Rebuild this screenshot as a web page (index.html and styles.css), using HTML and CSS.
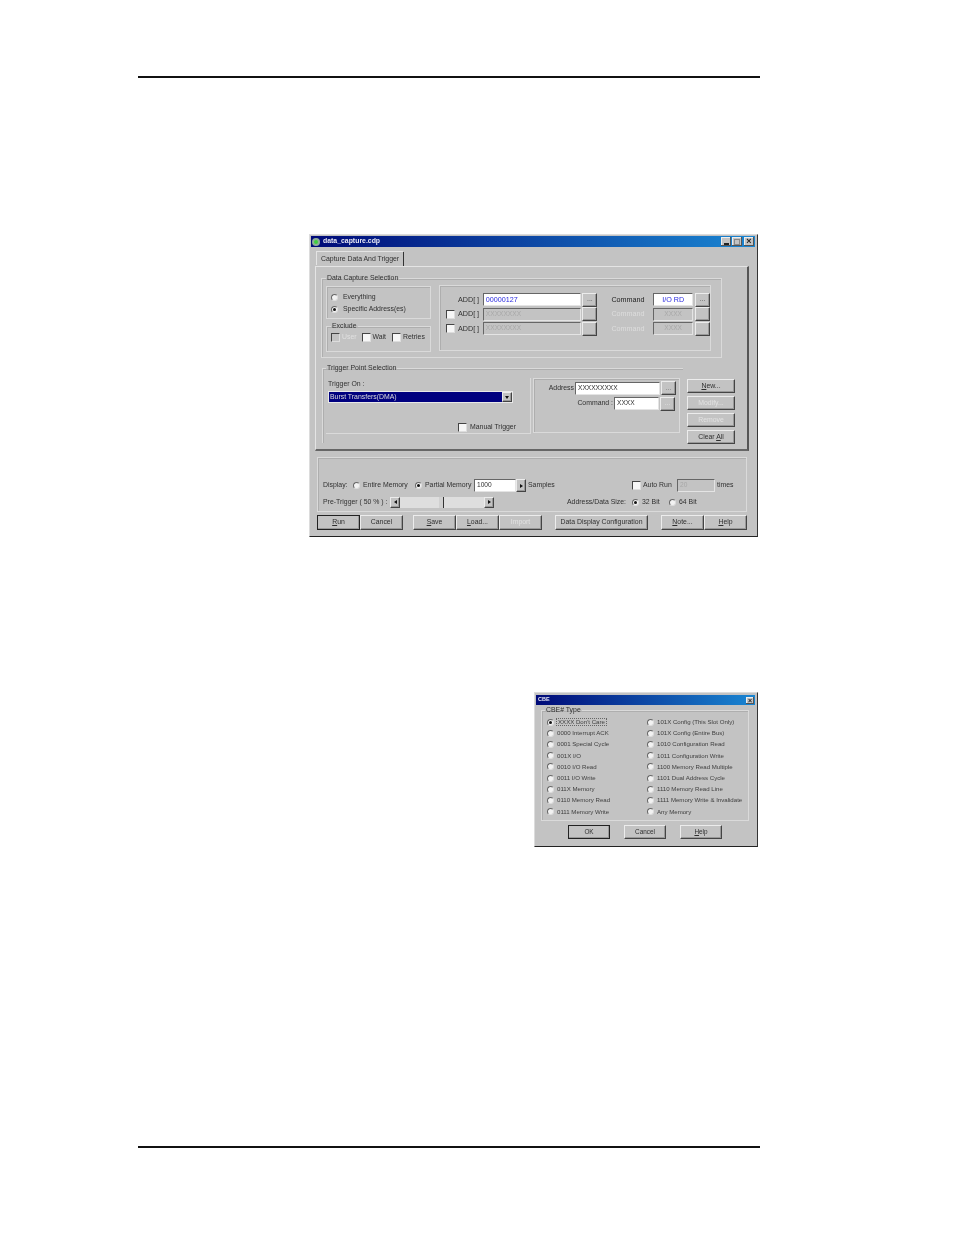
FILE: index.html
```html
<!DOCTYPE html>
<html lang="en">
<head>
<meta charset="utf-8">
<title>data_capture.cdp</title>
<link rel="stylesheet" href="styles.css">
</head>
<body>
<div class="page">
  <div class="rule"></div>

  <section class="win win-main">
    <div class="title">
      <span class="app-icon"></span>
      <span class="title-text">data_capture.cdp</span>
      <span class="wbtns">
        <span class="wbtn"><span class="g-min"></span></span>
        <span class="wbtn"><span class="g-max"></span></span>
        <span class="wbtn wbtn-x">×</span>
      </span>
    </div>
    <div class="tabs"><span class="tab">Capture Data And Trigger</span></div>
    <div class="panel">
      <fieldset class="grp grp-capture">
        <legend>Data Capture Selection</legend>
        <div class="capture-row">
          <div class="capture-left">
            <div class="box box-scope">
              <label class="opt"><i class="radio"></i>Everything</label>
              <label class="opt"><i class="radio on"></i>Specific Address(es)</label>
            </div>
            <fieldset class="grp grp-exclude">
              <legend>Exclude</legend>
              <div class="exclude-row">
                <label class="opt dis"><i class="check grey"></i>User</label>
                <label class="opt"><i class="check"></i>Wait</label>
                <label class="opt"><i class="check"></i>Retries</label>
              </div>
            </fieldset>
          </div>
          <div class="box box-addr">
            <div class="addr-row">
              <span class="addr-check"></span><span class="addr-label">ADD[ ]</span>
              <span class="field f-addr blue">00000127</span><span class="btn b-dots">...</span>
              <span class="cmd-label">Command</span>
              <span class="field f-cmd blue center">I/O RD</span><span class="btn b-dots">...</span>
            </div>
            <div class="addr-row">
              <span class="addr-check"><i class="check"></i></span><span class="addr-label">ADD[ ]</span>
              <span class="field f-addr off">XXXXXXXX</span><span class="btn b-dots"></span>
              <span class="cmd-label dis">Command</span>
              <span class="field f-cmd off center">XXXX</span><span class="btn b-dots"></span>
            </div>
            <div class="addr-row">
              <span class="addr-check"><i class="check"></i></span><span class="addr-label">ADD[ ]</span>
              <span class="field f-addr off">XXXXXXXX</span><span class="btn b-dots"></span>
              <span class="cmd-label dis">Command</span>
              <span class="field f-cmd off center">XXXX</span><span class="btn b-dots"></span>
            </div>
          </div>
        </div>
      </fieldset>

      <div class="trigger-row">
        <fieldset class="grp grp-trigger">
          <legend>Trigger Point Selection</legend>
          <div class="trigger-inner">
            <div class="box box-on">
              <div class="on-label">Trigger On :</div>
              <div class="combo"><span class="combo-text">Burst Transfers(DMA)</span><span class="btn combo-arrow"><i class="tri-down"></i></span></div>
              <label class="opt opt-manual"><i class="check"></i>Manual Trigger</label>
            </div>
            <div class="box box-match">
              <div class="match-row">
                <span class="match-label">Address</span><span class="field f-match">XXXXXXXXX</span><span class="btn b-match">...</span>
              </div>
              <div class="match-row">
                <span class="match-label match-label-long">Command :</span><span class="field f-match-short">XXXX</span><span class="btn b-match dis">...</span>
              </div>
            </div>
          </div>
        </fieldset>
        <div class="side-btns">
          <span class="btn b-side"><span><u>N</u>ew...</span></span>
          <span class="btn b-side dis">Modify...</span>
          <span class="btn b-side dis">Remove</span>
          <span class="btn b-side"><span>Clear <u>A</u>ll</span></span>
        </div>
      </div>
    </div>

    <div class="options">
      <div class="opt-row opt-row-first">
        <span class="l-display">Display:</span>
        <label class="opt o-entire"><i class="radio"></i>Entire Memory</label>
        <label class="opt o-partial"><i class="radio on"></i>Partial Memory</label>
        <span class="field f-samples">1000</span>
        <span class="btn spin"><i class="tri-right"></i></span>
        <span class="l-samples">Samples</span>
        <label class="opt o-auto"><i class="check"></i>Auto Run</label>
        <span class="field f-times off">20</span>
        <span class="l-times">times</span>
      </div>
      <div class="opt-row opt-row-second">
        <span class="l-pre">Pre-Trigger ( 50 % ) :</span>
        <div class="scroll">
          <span class="btn sb"><i class="tri-left"></i></span>
          <span class="track"><span class="thumb"></span></span>
          <span class="btn sb"><i class="tri-right"></i></span>
        </div>
        <span class="l-size">Address/Data Size:</span>
        <label class="opt o-32"><i class="radio on"></i>32 Bit</label>
        <label class="opt o-64"><i class="radio"></i>64 Bit</label>
      </div>
    </div>

    <div class="actions">
      <span class="btn b-act default"><span><u>R</u>un</span></span>
      <span class="btn b-act">Cancel</span>
      <span class="btn b-act sp-a"><span><u>S</u>ave</span></span>
      <span class="btn b-act"><span><u>L</u>oad...</span></span>
      <span class="btn b-act dis">Import</span>
      <span class="btn b-wide">Data Display Configuration</span>
      <span class="btn b-act"><span><u>N</u>ote...</span></span>
      <span class="btn b-act"><span><u>H</u>elp</span></span>
    </div>
  </section>

  <section class="win win-cbe">
    <div class="title title-small">
      <span class="title-text">CBE</span>
      <span class="wbtns"><span class="wbtn wbtn-x">×</span></span>
    </div>
    <fieldset class="grp grp-cbe">
      <legend>CBE# Type</legend>
      <div class="cbe-grid">
        <label class="opt"><i class="radio on"></i><span class="focus">XXXX Don't Care</span></label>
        <label class="opt"><i class="radio"></i>101X Config (This Slot Only)</label>
        <label class="opt"><i class="radio"></i>0000 Interrupt ACK</label>
        <label class="opt"><i class="radio"></i>101X Config (Entire Bus)</label>
        <label class="opt"><i class="radio"></i>0001 Special Cycle</label>
        <label class="opt"><i class="radio"></i>1010 Configuration Read</label>
        <label class="opt"><i class="radio"></i>001X I/O</label>
        <label class="opt"><i class="radio"></i>1011 Configuration Write</label>
        <label class="opt"><i class="radio"></i>0010 I/O Read</label>
        <label class="opt"><i class="radio"></i>1100 Memory Read Multiple</label>
        <label class="opt"><i class="radio"></i>0011 I/O Write</label>
        <label class="opt"><i class="radio"></i>1101 Dual Address Cycle</label>
        <label class="opt"><i class="radio"></i>011X Memory</label>
        <label class="opt"><i class="radio"></i>1110 Memory Read Line</label>
        <label class="opt"><i class="radio"></i>0110 Memory Read</label>
        <label class="opt"><i class="radio"></i>1111 Memory Write &amp; Invalidate</label>
        <label class="opt"><i class="radio"></i>0111 Memory Write</label>
        <label class="opt"><i class="radio"></i>Any Memory</label>
      </div>
    </fieldset>
    <div class="cbe-actions">
      <span class="btn b-cbe default">OK</span>
      <span class="btn b-cbe">Cancel</span>
      <span class="btn b-cbe"><span><u>H</u>elp</span></span>
    </div>
  </section>

  <div class="rule rule-bottom"></div>
</div>
</body>
</html>
```
FILE: styles.css
```css
* { box-sizing: border-box; }
html, body { margin: 0; background: #fff; }
body { font-family: "Liberation Sans", Arial, sans-serif; font-size: 6.9px; line-height: 1; color: #303030; }
.page { width: 954px; height: 1235px; padding-top: 76px; overflow: hidden; }
.rule { width: 622px; height: 2px; margin-left: 138px; background: #111; }
.rule-bottom { margin-top: 299px; }

/* windows */
.win { background: #c3c3c3; border: 1px solid; border-color: #dcdcdc #333 #222 #dcdcdc; padding: 1px; filter: blur(.45px); }
.win-main { width: 449px; height: 303px; margin: 156px 0 0 309px; }
.win-cbe { width: 224px; height: 155px; margin: 155px 0 0 534px; }
.title { height: 11px; margin-right: 1px; display: flex; align-items: center; gap: 3px; padding: 0 1px; color: #e8e8f4; font-weight: 700; font-size: 6.9px; background: linear-gradient(90deg, #000a78, #1a86d2); }
.title-small { height: 10px; font-size: 5.5px; margin-top: 1px; padding-left: 2px; }
.app-icon { width: 8px; height: 8px; border-radius: 50%; background: #3ecf3e; border: 2px solid #8fae9a; }
.wbtns { margin-left: auto; display: flex; gap: 1px; }
.wbtn { width: 10px; height: 9px; background: #c3c3c3; display: flex; align-items: flex-end; justify-content: center; color: #222; font-size: 9px; line-height: 9px; box-shadow: inset -1px -1px 0 #555, inset 1px 1px 0 #eee; }
.wbtn-x { margin-left: 1px; align-items: center; }
.title-small .wbtn { width: 8px; height: 7px; font-size: 7px; line-height: 7px; }
.g-min { width: 5px; height: 2px; margin-bottom: 1px; background: #222; }
.g-max { width: 6px; height: 6px; margin-bottom: 1px; border: 1px solid #888; }

/* tabs */
.tabs { height: 19px; padding: 5px 0 0 6px; display: flex; }
.tab { width: 87px; height: 14px; padding: 0 0 0 4px; display: flex; align-items: center; border-right: 1px solid #333; box-shadow: -1px -1px 0 #e4e4e4; }
.panel { width: 434px; height: 185px; margin-left: 4px; padding: 7px 0 0 6px; border-top: 1px solid #e4e4e4; border-left: 1px solid #e4e4e4; border-right: 2px solid #555; border-bottom: 2px solid #666; }

/* groups */
.grp { margin: 0; padding: 0; min-width: 0; border: 1px solid #dadada; box-shadow: inset 1px 1px 0 #aeaeae; }
.grp legend { padding: 0 1px; margin-left: 0; font-size: 6.9px; line-height: 8px; }
.box { border: 1px solid #dadada; box-shadow: inset 1px 1px 0 #aeaeae; }
.grp-capture { width: 401px; height: 84px; margin-left: -1px; padding: 3px 0 0 4px; }
.capture-row { display: flex; gap: 8px; }
.capture-left { width: 105px; display: flex; flex-direction: column; gap: 3px; padding-top: 1px; }
.box-scope { height: 33px; padding: 6px 0 0 4px; display: flex; flex-direction: column; gap: 4px; }
.box-scope .opt { height: 8px; gap: 5px; }
.grp-exclude { height: 30px; padding: 3px 0 0 4px; }
.exclude-row { display: flex; }
.exclude-row .opt { width: 30.5px; gap: 2px; }
.box-addr { width: 272px; height: 66px; padding: 7px 0 0 6px; display: flex; flex-direction: column; gap: 1.5px; }
.addr-row { height: 13px; display: flex; align-items: center; }
.addr-check { width: 12px; }
.addr-label { width: 25px; font-size: 7.2px; }
.cmd-label { width: 37px; margin-left: 14px; font-size: 7.2px; color: #222; }
.cmd-label.dis { color: #ddd; }

/* controls */
.opt { display: flex; align-items: center; gap: 3px; white-space: nowrap; }
.dis { color: #e0e0e0; }
.radio { width: 7px; height: 7px; flex: none; border-radius: 50%; background: #f2f2f2; border: 1px solid; border-color: #666 #ddd #ddd #666; display: flex; align-items: center; justify-content: center; }
.radio.on::after { content: ""; width: 3px; height: 3px; border-radius: 50%; background: #111; }
.check { display: block; width: 9px; height: 9px; flex: none; background: #f6f6f6; border: 1px solid; border-color: #444 #ddd #ddd #444; }
.check.grey { background: #c3c3c3; }
.field { height: 13px; display: flex; align-items: center; padding-left: 2px; background: #fff; border: 1px solid; border-color: #666 #e4e4e4 #e4e4e4 #666; font-size: 6.6px; overflow: hidden; white-space: nowrap; }
.blue { color: #2a2ae0; font-size: 7.2px; }
.center { justify-content: center; padding-left: 0; }
.off { background: #c3c3c3; color: #a8a8a8; }
.f-addr { width: 99px; margin-right: 1px; }
.f-cmd { width: 40px; margin: 0 2px 0 5px; }
.btn { display: flex; align-items: center; justify-content: center; background: #c3c3c3; border: 1px solid; border-color: #ececec #444 #444 #ececec; box-shadow: inset -1px -1px 0 #999; white-space: nowrap; }
.btn.dis { color: #e2e2e2; }
.btn.default { outline: 1px solid #222; outline-offset: -1px; }
u { text-decoration: underline; text-underline-offset: 1px; }
.b-dots { width: 15px; height: 14px; color: #555; }

/* trigger */
.trigger-row { display: flex; gap: 4px; margin-top: 6px; }
.grp-trigger { width: 361px; height: 79px; padding: 6px 0 0 3px; border-right: 0; border-bottom: 0; }
.trigger-inner { display: flex; gap: 2px; }
.box-on { width: 205px; height: 56px; padding: 3px 0 0 2px; border-top: 0; border-left: 0; box-shadow: none; display: flex; flex-direction: column; }
.on-label { height: 10px; }
.combo { width: 185px; height: 12px; display: flex; background: #00007f; border: 1px solid #e8e8e8; color: #ddd; align-items: center; padding-left: 1px; }
.combo-text { flex: 1; }
.combo-arrow { width: 10px; height: 10px; }
.tri-down { width: 0; height: 0; border: 2.5px solid transparent; border-top: 3px solid #111; border-bottom: 0; }
.tri-right { width: 0; height: 0; border: 2.5px solid transparent; border-left: 3px solid #111; border-right: 0; }
.tri-left { width: 0; height: 0; border: 2.5px solid transparent; border-right: 3px solid #111; border-left: 0; }
.opt-manual { margin: 20px 0 0 130px; }
.box-match { width: 147px; height: 55px; padding: 2px 0 0 0; display: flex; flex-direction: column; gap: 1.5px; }
.match-row { height: 14px; display: flex; align-items: center; }
.match-label { width: 41px; text-align: right; padding-right: 1px; white-space: nowrap; }
.match-label-long { width: 80px; }
.f-match { width: 85px; }
.f-match-short { width: 45px; }
.b-match { width: 15px; height: 14px; margin-left: 1px; color: #777; }
.side-btns { width: 48px; display: flex; flex-direction: column; gap: 3px; padding-top: 15px; }
.b-side { height: 14px; }

/* options */
.options { width: 430px; height: 55px; margin: 6px 0 0 6px; padding: 21px 0 0 5px; border: 1px solid #dadada; box-shadow: inset 1px 1px 0 #aeaeae; }
.opt-row { display: flex; align-items: center; white-space: nowrap; }
.opt-row-first { height: 13px; }
.opt-row-second { height: 12px; margin-top: 4px; }
.l-display { width: 30px; }
.o-entire { width: 62px; }
.o-partial { width: 59px; }
.f-samples { width: 42px; }
.spin { width: 10px; height: 13px; margin-right: 2px; }
.l-samples { width: 30px; }
.o-auto { width: 45px; margin-left: 74px; gap: 2px; }
.f-times { width: 38px; }
.l-times { margin-left: 2px; }
.l-pre { width: 67px; }
.scroll { width: 104px; height: 11px; display: flex; }
.sb { width: 10px; height: 11px; flex: none; }
.track { flex: 1; background: #dedede; display: flex; padding-left: 39px; }
.thumb { width: 5px; height: 11px; background: #d0d0d0; border-right: 1px solid #333; }
.l-size { margin-left: 73px; width: 65px; }
.o-32 { width: 37px; }
.o-64 { width: 30px; }

/* actions */
.actions { display: flex; margin: 3px 0 0 6px; }
.b-act { width: 43px; height: 15px; }
.sp-a { margin-left: 10px; }
.b-wide { width: 93px; height: 15px; margin: 0 13px; }

/* CBE */
.grp-cbe { width: 208px; height: 115px; margin: 1px 0 0 5px; padding: 2.5px 0 0 5px; }
.grp-cbe legend { margin-left: -2px; }
.cbe-grid { display: grid; grid-template-columns: 100px 1fr; grid-auto-rows: 11.2px; }
.cbe-grid .opt { font-size: 6.1px; color: #404040; }
.focus { outline: 1px dotted #666; padding: 0 1px; }
.cbe-actions { display: flex; gap: 14px; margin: 4px 0 0 32px; }
.b-cbe { width: 42px; height: 14px; font-size: 6.4px; }
```
